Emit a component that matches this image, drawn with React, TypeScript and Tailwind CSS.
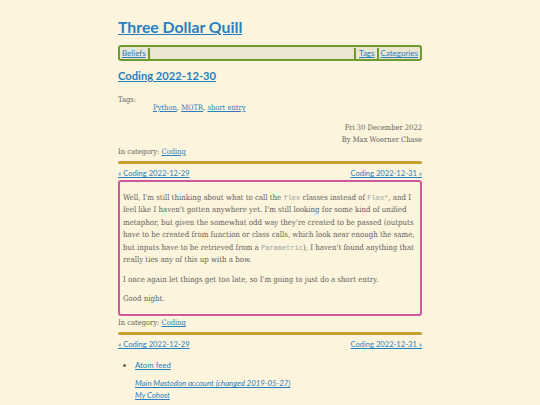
import React from 'react';

const link = 'text-[#2a7fc0] underline';

function Rule() {
  return <div className="h-[3px] bg-[#c4a12e] rounded-sm" />;
}

function PostNav() {
  return (
    <div className="flex justify-between font-['Lato',sans-serif] text-[7.6px] leading-[12px]">
      <a className={link} href="#">« Coding 2022-12-29</a>
      <a className={link} href="#">Coding 2022-12-31 »</a>
    </div>
  );
}

function Code({ children }: { children: React.ReactNode }) {
  return (
    <code className="font-['Liberation_Mono',monospace] text-[7px] leading-[0] text-[#9aa3a3] [font-stretch:normal]">
      {children}
    </code>
  );
}

export default function App() {
  return (
    <div className="min-h-[405px] w-full bg-[#fcf4dc] text-[#646360] font-['DejaVu_Serif_Condensed','DejaVu_Serif',serif] [font-stretch:condensed]">
      <div className="mx-auto w-[304px] pt-[17px]">
        <h1 className="font-['Lato',sans-serif] font-bold text-[15.8px] leading-[20px] [font-stretch:normal]">
          <a className={link} href="#">Three Dollar Quill</a>
        </h1>

        <nav className="mt-[8px] flex h-[16px] items-center rounded-[3px] border-2 border-[#6e9b2b] bg-[#ece5d1] px-[2px] font-['Lato',sans-serif] text-[8px] [font-stretch:normal]">
          <a className={link} href="#">Beliefs</a>
          <span className="ml-[2px] h-[11px] w-[2px] bg-[#6e9b2b]" />
          <span className="flex-1" />
          <span className="mr-[3px] h-[11px] w-[2px] bg-[#6e9b2b]" />
          <a className={link} href="#">Tags</a>
          <span className="mx-[2px] h-[11px] w-[2px] bg-[#6e9b2b]" />
          <a className={link} href="#">Categories</a>
        </nav>

        <h2 className="mt-[7px] font-['Lato',sans-serif] font-bold text-[11.2px] leading-[16px] [font-stretch:normal]">
          <a className={link} href="#">Coding 2022-12-30</a>
        </h2>

        <dl className="mt-[12px] text-[7.5px] leading-[8px]">
          <dt>Tags:</dt>
          <dd className="ml-[35px] mt-[-1px] leading-[10px]">
            <a className={link} href="#">Python</a>, <a className={link} href="#">MOTR</a>,{' '}
            <a className={link} href="#">short entry</a>
          </dd>
        </dl>

        <div className="mt-[9px] text-right text-[7.5px] leading-[12px]">
          <div>Fri 30 December 2022</div>
          <div>By Max Woerner Chase</div>
        </div>
        <div className="text-[7.5px] leading-[12px]">
          In category: <a className={link} href="#">Coding</a>
        </div>

        <div className="mt-[2.5px]">
          <Rule />
        </div>
        <div className="mt-[3.5px]">
          <PostNav />
        </div>

        <article className="mt-[1px] rounded-[3px] border-2 border-[#d0599e] px-[3px] pt-[9.5px] pb-[8.5px] text-[7.8px] leading-[12.6px]">
          <p>
            Well, I'm still thinking about what to call the <Code>flex</Code> classes instead of <Code>Flex*</Code>, and I
            feel like I haven't gotten anywhere yet. I'm still looking for some kind of unified metaphor, but given the
            somewhat odd way they're created to be passed (outputs have to be created from function or class calls, which
            look near enough the same, but inputs have to be retrieved from a <Code>Parametric</Code>), I haven't found
            anything that really ties any of this up with a bow.
          </p>
          <p className="mt-[7px]">I once again let things get too late, so I'm going to just do a short entry.</p>
          <p className="mt-[6.5px]">Good night.</p>
        </article>

        <div className="mt-[1px] text-[7.5px] leading-[12px]">
          In category: <a className={link} href="#">Coding</a>
        </div>

        <div className="mt-[2.5px]">
          <Rule />
        </div>
        <div className="mt-[3.5px]">
          <PostNav />
        </div>

        <ul className="mt-[9px] ml-[9px] list-disc pl-[8px] font-['Lato',sans-serif] text-[7.8px] leading-[12px] [font-stretch:normal]">
          <li>
            <a className={link} href="#">Atom feed</a>
          </li>
        </ul>
        <div className="mt-[6px] ml-[17px] flex flex-col font-['Lato',sans-serif] italic text-[7.8px] leading-[12px] [font-stretch:normal]">
          <a className={link} href="#">Main Mastodon account (changed 2019-05-27)</a>
          <a className={link} href="#">My Cohost</a>
        </div>
      </div>
    </div>
  );
}
